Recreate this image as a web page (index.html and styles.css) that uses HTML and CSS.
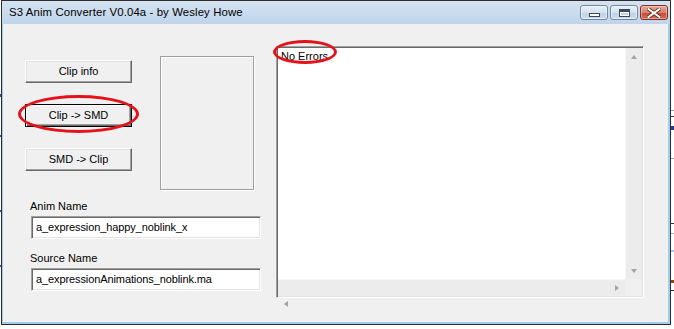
FILE: index.html
```html
<!DOCTYPE html>
<html>
<head>
<meta charset="utf-8">
<link rel="stylesheet" href="styles.css">
</head>
<body>
<div class="window">
  <div class="titlebar">
    <span class="title">S3 Anim Converter V0.04a - by Wesley Howe</span>
    <div class="caption-btns">
      <div class="cbtn"><span class="g-min"></span></div>
      <div class="cbtn"><span class="g-max"></span></div>
      <div class="cbtn close">
        <svg width="14" height="10" viewBox="0 0 14 10"><path d="M1.5 1 L12.5 9 M12.5 1 L1.5 9" stroke="#5a2a22" stroke-width="3.6" stroke-linecap="square"/><path d="M1.5 1 L12.5 9 M12.5 1 L1.5 9" stroke="#fff" stroke-width="2" stroke-linecap="square"/></svg>
      </div>
    </div>
  </div>
  <div class="client">
    <div class="left">
      <div class="top-row">
        <div class="btn-col">
          <div class="btn">Clip info</div>
          <div class="btn default">Clip -&gt; SMD</div>
          <div class="btn">SMD -&gt; Clip</div>
        </div>
        <div class="frame"></div>
      </div>
      <div class="label first">Anim Name</div>
      <div class="input">a_expression_happy_noblink_x</div>
      <div class="label">Source Name</div>
      <div class="input">a_expressionAnimations_noblink.ma</div>
    </div>
    <div class="edit">
      <div class="edit-body">
        <div class="edit-text">No Errors</div>
        <div class="vscroll">
          <div class="sb-btn"><span class="arr up"></span></div>
          <div class="sb-track"></div>
          <div class="sb-btn"><span class="arr down"></span></div>
        </div>
      </div>
      <div class="hrow">
        <div class="hscroll">
          <div class="sb-btn"><span class="arr left"></span></div>
          <div class="sb-track"></div>
          <div class="sb-btn"><span class="arr right"></span></div>
        </div>
        <div class="corner"></div>
      </div>
    </div>
    <div class="ring ring-btn"></div>
    <div class="ring ring-msg"></div>
  </div>
</div>
</body>
</html>
```
FILE: styles.css
```css
* { box-sizing: border-box; }
html, body { margin: 0; padding: 0; }
body {
  width: 674px; height: 329px; overflow: hidden;
  background-color: #fff;
  background-image:
    linear-gradient(to bottom,
      transparent 110px, #9a9a9a 110px, #9a9a9a 111px,
      transparent 111px, transparent 116px, #3a3a3a 116px, #3a3a3a 117px,
      transparent 117px, transparent 126px, #2a3a8a 126px, #2a3a8a 130px,
      transparent 130px, transparent 158px, #a0a0a0 158px, #a0a0a0 159px,
      transparent 159px, transparent 223px, #3a3a3a 223px, #3a3a3a 224px,
      transparent 224px, transparent 233px, #b0b0b0 233px, #b0b0b0 234px,
      transparent 234px, transparent 250px, #a8c8e8 250px, #a8c8e8 252px,
      transparent 252px, transparent 280px, #8a4a10 280px, #8a4a10 283px,
      transparent 283px, transparent 290px, #2a2a2a 290px, #2a2a2a 291px,
      transparent 291px),
    linear-gradient(to bottom,
      transparent 94px, #3050a0 94px, #3050a0 97px,
      transparent 97px, transparent 135px, #3050a0 135px, #3050a0 137px,
      transparent 137px, transparent 210px, #3050a0 210px, #3050a0 212px,
      transparent 212px, transparent 265px, #3050a0 265px, #3050a0 267px,
      transparent 267px);
  background-repeat: no-repeat;
  background-size: 3px 329px, 1px 329px;
  background-position: 671px 0, 0 0;
  font-family: "Liberation Sans", Arial, sans-serif;
  font-size: 11px; color: #000;
}
.window {
  margin-left: 1px;
  width: 670px; height: 325px;
  border: 1px solid #2d2d2d;
  background: #9fcdea;
  display: flex; flex-direction: column;
  padding-bottom: 2px;
}
.titlebar {
  height: 23px; flex: none;
  background: linear-gradient(#d5e3f2, #bfd4eb);
  display: flex; align-items: flex-start;
  padding-left: 7px;
}
.title { font-size: 11.4px; line-height: 23px; letter-spacing: 0.1px; color: #000; }
.caption-btns { margin-left: auto; margin-right: 2px; margin-top: 4px; display: flex; gap: 2px; }
.cbtn {
  width: 28px; height: 15px;
  border: 1px solid #7487a0; border-radius: 3px;
  background: linear-gradient(#e8f0f9 0%, #d5e1ef 50%, #c0d1e6 51%, #ccdbed 100%);
  display: flex; align-items: center; justify-content: center;
  box-shadow: inset 0 0 0 1px rgba(255,255,255,0.55);
}
.cbtn.close {
  border-color: #7a3226;
  background: linear-gradient(#e9a897 0%, #da7f6b 50%, #c84a34 51%, #d46a55 100%);
  box-shadow: inset 0 0 0 1px rgba(255,220,210,0.5);
}
.g-min { width: 11px; height: 4px; border: 1px solid #3b4a5e; background: #fff; margin-top: 5px; }
.g-max { width: 11px; height: 8px; border: 1px solid #3b4a5e; border-top-width: 3px; background: transparent; box-shadow: inset 0 0 0 1px #fff; }
.client {
  flex: 1;
  margin: 0 2px 0 1px;
  background: #f0f0f0;
  position: relative;
  display: flex; align-items: flex-start;
  padding-left: 22px;
}
.left { width: 251px; margin-top: 32px; display: flex; flex-direction: column; }
.top-row { display: flex; align-items: flex-start; gap: 28px; }
.btn-col { display: flex; flex-direction: column; gap: 21px; margin-top: 4px; }
.btn {
  width: 107px; height: 23px;
  background: #f0f0f0;
  border-top: 1px solid #fff; border-left: 1px solid #fff;
  border-right: 1px solid #696969; border-bottom: 1px solid #696969;
  box-shadow: inset -1px -1px 0 #a0a0a0, inset 1px 1px 0 #e3e3e3;
  display: flex; align-items: center; justify-content: center;
  font-size: 11px; padding-bottom: 1px;
}
.btn.default {
  border: 1px solid #000;
  box-shadow: inset 1px 1px 0 #fff, inset -1px -1px 0 #696969, inset -2px -2px 0 #a0a0a0;
}
.frame {
  width: 94px; height: 134px;
  border: 1px solid #a0a0a0;
  box-shadow: inset 1px 1px 0 #fff, 1px 1px 0 #fff;
}
.label { margin-left: 5px; margin-top: 13px; line-height: 13px; height: 13px; }
.label.first { margin-top: 10px; }
.input {
  margin-left: 6px; margin-top: 3px;
  width: 230px; height: 23px;
  background: #fff;
  border-top: 1px solid #a0a0a0; border-left: 1px solid #a0a0a0;
  border-right: 1px solid #fff; border-bottom: 1px solid #fff;
  box-shadow: inset 1px 1px 0 #696969, inset -1px -1px 0 #e3e3e3;
  padding: 0 0 1px 4px;
  display: flex; align-items: center;
  font-size: 11px; letter-spacing: -0.1px;
}
.edit {
  margin-top: 22px;
  width: 368px; height: 252px;
  background: #fff;
  border-top: 1px solid #a0a0a0; border-left: 1px solid #a0a0a0;
  border-right: 1px solid #fff; border-bottom: 1px solid #fff;
  box-shadow: inset 1px 1px 0 #696969, inset -1px -1px 0 #e3e3e3;
  padding: 1px;
  display: flex; flex-direction: column;
}
.edit-body { flex: 1; display: flex; min-height: 0; }
.edit-text { flex: 1; padding: 2px 0 0 3px; line-height: 13px; font-size: 11px; }
.vscroll { width: 17px; display: flex; flex-direction: column; background: #ececec; border-left: 1px solid #f7f7f7; }
.hrow { height: 17px; display: flex; }
.hscroll { flex: 1; display: flex; background: #ececec; border-top: 1px solid #f7f7f7; }
.corner { width: 17px; background: #f0f0f0; }
.sb-btn { width: 16px; height: 16px; display: flex; align-items: center; justify-content: center; flex: none; }
.sb-track { flex: 1; }
.arr { width: 0; height: 0; border-style: solid; border-color: transparent; }
.arr.up { border-width: 0 3.5px 4px 3.5px; border-bottom-color: #a3a3a3; margin-top: 1px; }
.arr.down { border-width: 4px 3.5px 0 3.5px; border-top-color: #a3a3a3; }
.arr.left { border-width: 3.5px 4px 3.5px 0; border-right-color: #a3a3a3; }
.arr.right { border-width: 3.5px 0 3.5px 4px; border-left-color: #a3a3a3; }
.ring {
  position: absolute;
  border: 3px solid #e3131b;
  border-radius: 50%;
}
.ring-btn { left: 15px; top: 71px; width: 121px; height: 38px; }
.ring-msg { left: 270px; top: 16px; width: 64px; height: 24px; }
```
